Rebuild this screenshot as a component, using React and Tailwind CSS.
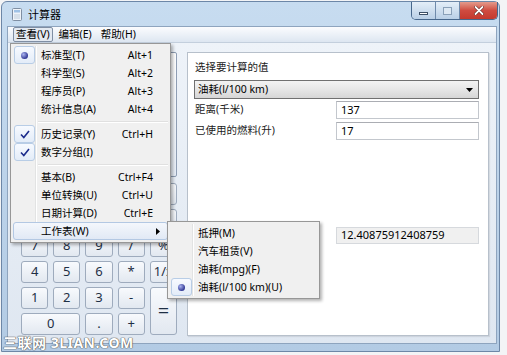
// Windows 7 计算器 — 油耗工作表，"查看"菜单展开

const F = "font-['Noto_Sans','Noto_Sans_CJK_SC',sans-serif]";

const viewMenu = [
  { label: "标准型(T)", keys: "Alt+1", mark: "radio" },
  { label: "科学型(S)", keys: "Alt+2" },
  { label: "程序员(P)", keys: "Alt+3" },
  { label: "统计信息(A)", keys: "Alt+4" },
  "sep",
  { label: "历史记录(Y)", keys: "Ctrl+H", mark: "check" },
  { label: "数字分组(I)", mark: "check" },
  "sep",
  { label: "基本(B)", keys: "Ctrl+F4" },
  { label: "单位转换(U)", keys: "Ctrl+U" },
  { label: "日期计算(D)", keys: "Ctrl+E" },
  { label: "工作表(W)", sub: true, active: true },
];

const sheetMenu = [
  { label: "抵押(M)" },
  { label: "汽车租赁(V)" },
  { label: "油耗(mpg)(F)" },
  { label: "油耗(l/100 km)(U)", mark: "radio" },
];

const keys = [
  "MC", "MR", "MS", "M+", "M-",
  "←", "CE", "C", "±", "√",
  "7", "8", "9", "/", "%",
  "4", "5", "6", "*", "1/x",
  "1", "2", "3", "-", "=",
  "0", ".", "+",
];

function CalcIcon() {
  return (
    <svg width="10" height="13" viewBox="0 0 10 13">
      <rect x="0.5" y="0.5" width="9" height="12" rx="1" fill="#eef3f9" stroke="#7f8fa3" />
      <rect x="2" y="2" width="6" height="2.5" fill="#9fc2e6" />
      <rect x="2" y="6" width="6" height="5" fill="#d6e0ea" />
    </svg>
  );
}

function WinButtons() {
  return (
    <div className="mr-[1px] flex h-[18px] overflow-hidden rounded-b-[5px] border border-t-0 border-[#47678c]">
      <div className="flex w-[24px] items-center justify-center border-r border-[#6f8aab] bg-gradient-to-b from-[#e4eef8] to-[#b9cfe6]">
        <div className="mt-[5px] h-[3px] w-[9px] border border-[#3c4f66] bg-white" />
      </div>
      <div className="flex w-[24px] items-center justify-center border-r border-[#6f8aab] bg-gradient-to-b from-[#e4eef8] to-[#b9cfe6]">
        <div className="h-[8px] w-[9px] border border-[#8aa0b8] bg-[#dde8f3]" />
      </div>
      <div className="flex w-[37px] items-center justify-center bg-gradient-to-b from-[#e39a8c] via-[#cf4b40] to-[#c4392e]">
        <svg width="10" height="9" viewBox="0 0 10 9">
          <path d="M1.5 1 L8.5 8 M8.5 1 L1.5 8" stroke="#5a1a14" strokeWidth="3" strokeLinecap="round" />
          <path d="M1.5 1 L8.5 8 M8.5 1 L1.5 8" stroke="#ffffff" strokeWidth="1.8" strokeLinecap="round" />
        </svg>
      </div>
    </div>
  );
}

function Mark({ type }) {
  if (!type) return <div className="h-[18px] w-[21px]" />;
  return (
    <div className="flex h-[18px] w-[21px] items-center justify-center rounded-[3px] border border-[#b8cde6] bg-gradient-to-b from-[#f7faff] to-[#e3ecf8]">
      {type === "radio" ? (
        <div className="h-[7px] w-[7px] rounded-full bg-[radial-gradient(circle_at_35%_35%,#a9b3f0,#2a318f_75%)]" />
      ) : (
        <svg width="10" height="9" viewBox="0 0 10 9">
          <path d="M1 4.5 L3.8 7.5 L9 1" fill="none" stroke="#1c2c8c" strokeWidth="1.6" />
        </svg>
      )}
    </div>
  );
}

function MenuItem({ item, wide }) {
  return (
    <div
      className={`flex h-[18px] items-center rounded-[3px] border ${
        item.active
          ? "border-[#b3c8e3] bg-gradient-to-b from-[#f4f7fc] to-[#e1e9f5]"
          : "border-transparent"
      }`}
    >
      <Mark type={item.mark} />
      <span className="ml-[6px] flex-1 text-[10.5px] leading-none text-black">{item.label}</span>
      {item.keys && <span className="pr-[14px] text-[10.5px] leading-none text-black">{item.keys}</span>}
      {item.sub && (
        <svg className="mr-[7px]" width="4" height="7" viewBox="0 0 4 7">
          <path d="M0 0 L4 3.5 L0 7 Z" fill="#000" />
        </svg>
      )}
      {wide && null}
    </div>
  );
}

function Menu({ items, className }) {
  return (
    <div className={`absolute border border-[#979797] bg-[#f0f0f0] px-[2px] py-[2px] shadow-[2px_2px_3px_rgba(0,0,0,0.3)] ${className}`}>
      <div className="absolute bottom-[2px] left-[24px] top-[2px] w-[2px] border-l border-[#e2e3e3] bg-white" />
      <div className="relative flex flex-col">
        {items.map((it, i) =>
          it === "sep" ? (
            <div key={i} className="flex h-[7px] items-center pl-[25px]">
              <div className="h-[2px] w-full border-t border-[#e0e0e0] bg-white" />
            </div>
          ) : (
            <MenuItem key={i} item={it} />
          )
        )}
      </div>
    </div>
  );
}

function Key({ label }) {
  const span = label === "=" ? "row-span-2" : label === "0" ? "col-span-2" : "";
  const small = label.length > 1 && label !== "1/x";
  return (
    <div
      className={`flex items-center justify-center rounded-[3px] border border-[#9eabbd] bg-gradient-to-b from-[#f8fafd] to-[#e2e8f0] text-[#1e2f45] ${
        label === "=" ? "text-[20px]" : small ? "text-[10px]" : "text-[13px]"
      } ${span}`}
    >
      {label}
    </div>
  );
}

function Field({ children, value }) {
  return (
    <div className="flex h-[18px] items-center">
      <span className="pl-[1px] text-[10.5px] text-[#1b1b1b]">{children}</span>
      <div className="ml-auto flex h-full w-[143px] items-center border border-[#c3c7cd] border-t-[#abadb3] bg-white pl-[4px] text-[11px] text-black">
        {value}
      </div>
    </div>
  );
}

export default function App() {
  return (
    <div className={`relative h-[355px] w-[507px] overflow-hidden bg-[#f3f4f6] ${F}`}>
      <div className="ml-[1px] mt-[1px] flex h-[351px] w-[499px] flex-col rounded-t-[6px] border border-[#6d87a7] bg-gradient-to-b from-[#c7dcf0] via-[#bcd3ea] to-[#b3cbe4]">
        {/* 标题栏 */}
        <div className="flex h-[24px] items-start justify-between">
          <div className="flex items-center gap-[6px] pl-[10px] pt-[6px]">
            <CalcIcon />
            <span className="text-[11px] leading-none text-black">计算器</span>
          </div>
          <WinButtons />
        </div>

        {/* 客户区 */}
        <div className="mb-[7px] ml-[5px] mr-[2px] flex flex-1 flex-col border border-[#8ea4be]">
          <div className="flex h-[16px] items-center gap-[3px] border-b border-[#c3cfdd] bg-gradient-to-b from-[#fbfcfe] to-[#dde6f1] pl-[5px]">
            <span className="flex h-[15px] items-center rounded-[2px] border border-[#7f8ea3] bg-[#e3e9f1] px-[2px] text-[10.5px] text-black">查看(V)</span>
            <span className="px-[3px] text-[10.5px] text-black">编辑(E)</span>
            <span className="px-[3px] text-[10.5px] text-black">帮助(H)</span>
          </div>

          <div className="flex flex-1 gap-[10px] bg-gradient-to-b from-[#eef3f9] to-[#dfe7f1] pb-[7px] pl-[13px] pr-[7px] pt-[9px]">
            {/* 计算器键盘 */}
            <div className="flex w-[156px] flex-col">
              <div className="flex h-[125px] items-end justify-end rounded-[2px] border border-[#8e9db3] bg-gradient-to-b from-white to-[#e7eef7] pb-[2px] pr-[5px] text-[22px] leading-none text-[#111]">
                0
              </div>
              <div className="mt-[6px] grid grid-cols-5 grid-rows-[repeat(6,22px)] gap-x-[5px] gap-y-[4px]">
                {keys.map((k) => (
                  <Key key={k} label={k} />
                ))}
              </div>
            </div>

            {/* 工作表面板 */}
            <div className="flex flex-1 flex-col border border-[#b7c0cb] bg-white pl-[6px] pr-[9px] pt-[7px] shadow-[1px_1px_1px_rgba(0,0,0,0.08)]">
              <div className="h-[14px] pl-[1px] text-[10.5px] leading-[14px] text-[#1b1b1b]">选择要计算的值</div>
              <div className="mt-[6px] flex h-[19px] items-center justify-between border border-[#707070] bg-gradient-to-b from-[#f3f3f3] via-[#e6e6e6] to-[#d6d6d6] pl-[3px] pr-[5px]">
                <span className="text-[10.5px] text-black">油耗(l/100 km)</span>
                <svg width="7" height="4" viewBox="0 0 7 4">
                  <path d="M0 0 H7 L3.5 4 Z" fill="#000" />
                </svg>
              </div>
              <div className="mt-[2px]">
                <Field value="137">距离(千米)</Field>
              </div>
              <div className="mt-[3px]">
                <Field value="17">已使用的燃料(升)</Field>
              </div>
              <div className="ml-auto mt-[87px] flex h-[17px] w-[143px] items-center border border-[#d6d9dd] bg-[#f0f0f0] pl-[4px] text-[11px] text-black">
                12.40875912408759
              </div>
            </div>
          </div>
        </div>
      </div>

      {/* 展开的菜单 */}
      <Menu items={viewMenu} className="left-[10px] top-[43px] w-[161px]" />
      <Menu items={sheetMenu} className="left-[167px] top-[221px] w-[153px]" />

      {/* 水印 */}
      <div className="absolute left-[3px] top-[336px] text-[14px] font-bold leading-none tracking-[0.5px] text-white [text-shadow:0_0_1px_#555,0_0_1px_#555,0_0_1px_#555]">
        三联网 3LIAN.COM
      </div>
    </div>
  );
}
